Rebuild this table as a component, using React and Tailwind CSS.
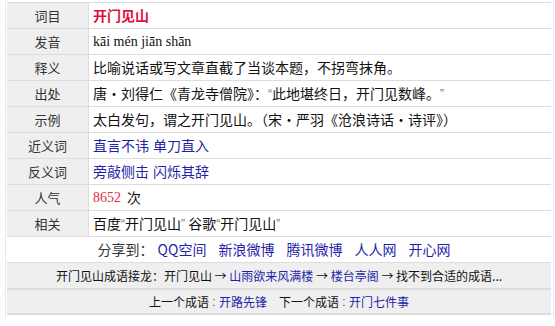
import React from 'react';

const font = { fontFamily: '"Microsoft YaHei", "Noto Sans CJK SC", sans-serif' };

function Row({ label, children }) {
    return (
        <div className="flex h-[26px] border-b border-[#dddddd]">
            <div className="w-[82px] shrink-0 bg-[#efefef] border-r border-[#dddddd] flex items-center justify-center text-[13px] text-[#333]">
                {label}
            </div>
            <div className="flex-1 flex items-center pl-[4px] text-[14px] text-[#111] whitespace-pre">
                {children}
            </div>
        </div>
    );
}

// narrow quote marks like the original page font
const Q = ({ children }) => <span className="font-['Liberation_Sans',sans-serif] text-[12px] text-[#777]">{children}</span>;
const Colon = () => <span className="font-['Liberation_Sans',sans-serif] text-[12px] text-[#555]"> : </span>;

const link = "text-[#1f1fa8]";

export default function App() {
    return (
        <div className="w-[555px] h-[326px] bg-white" style={font}>
            <div className="ml-[5px] w-[549px] pt-[2px] pb-[3px] pl-[1px] pr-[2px] border-l border-r border-[#d6eef5]">
                <div className="border-t border-[#dddddd]">
                    <Row label="词目">
                        <span className="font-bold text-[#e0103c]">开门见山</span>
                    </Row>
                    <Row label="发音">
                        <span className="font-['Liberation_Serif',serif] text-[14px]">kāi mén jiān shān</span>
                    </Row>
                    <Row label="释义">比喻说话或写文章直截了当谈本题，不拐弯抹角。</Row>
                    <Row label="出处">
                        唐·刘得仁《青龙寺僧院》：<Q>“</Q>此地堪终日，开门见数峰。<Q>”</Q>
                    </Row>
                    <Row label="示例">太白发句，谓之开门见山。（宋·严羽《沧浪诗话·诗评》）</Row>
                    <Row label="近义词">
                        <span className={link}>直言不讳</span>
                        <span className={`${link} ml-[4px]`}>单刀直入</span>
                    </Row>
                    <Row label="反义词">
                        <span className={link}>旁敲侧击</span>
                        <span className={`${link} ml-[4px]`}>闪烁其辞</span>
                    </Row>
                    <Row label="人气">
                        <span className="font-['Liberation_Serif',serif] text-[#e0303c]">8652</span>
                        <span className="ml-[6px]">次</span>
                    </Row>
                    <Row label="相关">
                        百度<Q>“</Q>开门见山<Q>”</Q> 谷歌<Q>“</Q>开门见山<Q>”</Q>
                    </Row>
                    <div className="h-[26px] flex items-center justify-center gap-[12px] pr-[10px] text-[14px] border-b border-[#dddddd]">
                        <span className="text-[#333] -mr-[8px]">分享到：</span>
                        <span className={link}>QQ空间</span>
                        <span className={link}>新浪微博</span>
                        <span className={link}>腾讯微博</span>
                        <span className={link}>人人网</span>
                        <span className={link}>开心网</span>
                    </div>
                    <div className="h-[27px] flex items-center justify-center bg-[#efefef] text-[12px] text-[#111] border-b-2 border-[#dddddd] whitespace-pre">
                        <span>开门见山成语接龙：开门见山 → </span>
                        <span className={link}>山雨欲来风满楼</span>
                        <span> → </span>
                        <span className={link}>楼台亭阁</span>
                        <span> → 找不到合适的成语...</span>
                    </div>
                    <div className="h-[25px] flex items-center justify-center bg-[#efefef] text-[12px] text-[#111] border-b-2 border-[#dddddd] whitespace-pre">
                        <span>上一个成语</span>
                        <Colon />
                        <span className={link}>开路先锋</span>
                        <span className="ml-[12px]">下一个成语</span>
                        <Colon />
                        <span className={link}>开门七件事</span>
                    </div>
                </div>
            </div>
        </div>
    );
}
